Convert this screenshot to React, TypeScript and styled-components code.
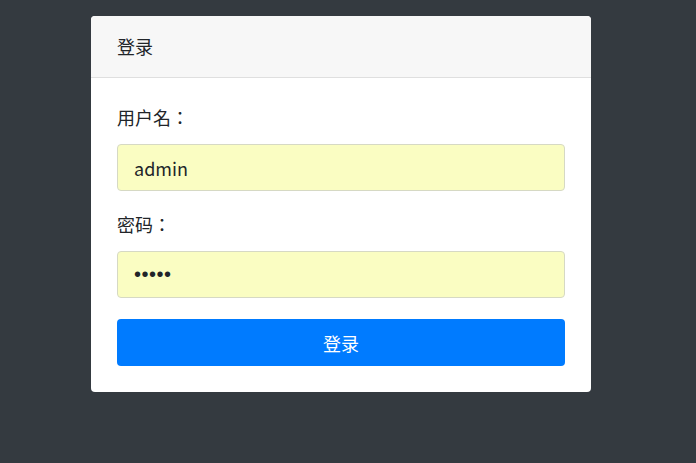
import React from 'react';
import styled, { createGlobalStyle } from 'styled-components';

const GlobalStyle = createGlobalStyle`
  html, body {
    margin: 0;
    padding: 0;
    background: #343a40;
  }
  body {
    font-family: "Noto Sans CJK SC", "Noto Sans", sans-serif;
  }
`;

const App = () => {
  return (
    <Page>
      <GlobalStyle />
      <Card>
        <CardHeader>登录</CardHeader>
        <CardBody>
          <Field>
            <Label>用户名：</Label>
            <Input type="text" value="admin" readOnly />
          </Field>
          <Field>
            <Label>密码：</Label>
            <Input type="password" value="admin" readOnly $secret />
          </Field>
          <SubmitBtn type="button">登录</SubmitBtn>
        </CardBody>
      </Card>
    </Page>
  );
};

export default App;

const Page = styled.div`
  width: 696px;
  height: 463px;
  background: #343a40;
  padding: 16px 0 0 91px;
  box-sizing: border-box;
`;

const Card = styled.div`
  width: 500px;
  background: #fff;
  border-radius: 4px;
  overflow: hidden;
`;

const CardHeader = styled.div`
  height: 62px;
  box-sizing: border-box;
  padding: 0 26px 2px;
  display: flex;
  align-items: center;
  background: #f7f7f7;
  border-bottom: 1px solid #dfdfdf;
  font-size: 18px;
  color: #212529;
`;

const CardBody = styled.div`
  padding: 26px 26px 26px;
  display: flex;
  flex-direction: column;
`;

const Field = styled.div`
  display: flex;
  flex-direction: column;
  margin-bottom: 20px;
`;

const Label = styled.label`
  font-family: "Noto Sans CJK TC", "Noto Sans CJK SC", sans-serif;
  font-size: 18px;
  line-height: 27px;
  color: #212529;
  margin-bottom: 13px;
`;

const Input = styled.input<{ $secret?: boolean }>`
  height: 47px;
  box-sizing: border-box;
  padding: 0 16px;
  border: 1px solid #d6d9c4;
  border-radius: 4px;
  background: #fafdc2;
  font-family: ${(p) => (p.$secret ? '"Liberation Sans", sans-serif' : '"Noto Sans CJK SC", "Noto Sans", sans-serif')};
  font-size: ${(p) => (p.$secret ? '20px' : '18px')};
  letter-spacing: ${(p) => (p.$secret ? '0.5px' : 'normal')};
  color: #212529;
  outline: none;
`;

const SubmitBtn = styled.button`
  height: 47px;
  margin-top: 1px;
  border: none;
  border-radius: 4px;
  background: #007bff;
  color: #fff;
  font-family: "Noto Sans CJK SC", "Noto Sans", sans-serif;
  font-size: 18px;
  cursor: pointer;
`;
